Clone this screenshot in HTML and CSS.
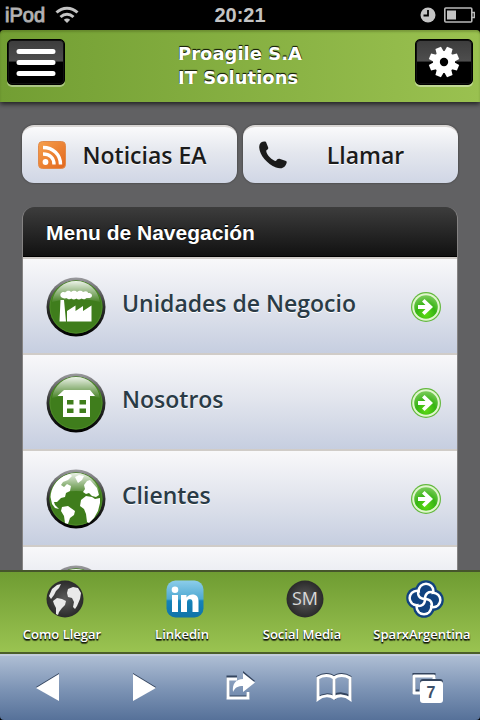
FILE: index.html
```html
<!DOCTYPE html>
<html lang="es">
<head>
<meta charset="utf-8">
<meta name="viewport" content="width=device-width, initial-scale=1">
<title>Proagile S.A</title>
<link rel="stylesheet" href="styles.css">
</head>
<body>
<svg class="defs" width="0" height="0" aria-hidden="true">
  <defs>
    <linearGradient id="gloss" x1="0" y1="0" x2="0" y2="1">
      <stop offset="0" stop-color="#fff" stop-opacity=".9"/>
      <stop offset="1" stop-color="#fff" stop-opacity=".05"/>
    </linearGradient>
    <linearGradient id="rim" x1="0" y1="0" x2="0" y2="1">
      <stop offset="0" stop-color="#9a9a9e"/>
      <stop offset=".5" stop-color="#2c2e2c"/>
      <stop offset="1" stop-color="#000"/>
    </linearGradient>
    <radialGradient id="dark">
      <stop offset="0" stop-color="#5c5c5c"/>
      <stop offset="1" stop-color="#2a2a2a"/>
    </radialGradient>
    <linearGradient id="orange" x1="0" y1="0" x2="1" y2="1">
      <stop offset="0" stop-color="#f6a04d"/>
      <stop offset="1" stop-color="#e2661c"/>
    </linearGradient>
    <linearGradient id="blue" x1="0" y1="0" x2="0" y2="1">
      <stop offset="0" stop-color="#8ccdea"/>
      <stop offset=".5" stop-color="#4fa9d2"/>
      <stop offset=".55" stop-color="#1583b8"/>
      <stop offset="1" stop-color="#0e73a8"/>
    </linearGradient>
    <radialGradient id="lime" cx=".5" cy=".8" r=".8">
      <stop offset="0" stop-color="#5fdc14"/>
      <stop offset=".5" stop-color="#36b413"/>
      <stop offset="1" stop-color="#7ccb5c"/>
    </radialGradient>
    <symbol id="ball" viewBox="0 0 60 60">
      <circle cx="30" cy="30" r="29.5" fill="url(#rim)"/>
      <circle cx="30" cy="30" r="26.5" fill="#3f7d1c"/>
      <circle cx="30" cy="30" r="26" fill="none" stroke="#4d8a28"/>
    </symbol>
    <symbol id="shine" viewBox="0 0 60 60">
      <path d="M6 25C8 12 18 4 30 4s22 8 24 21c-14-4-34-4-48 0z" fill="url(#gloss)"/>
    </symbol>
    <symbol id="go" viewBox="0 0 32 32">
      <circle cx="16" cy="16" r="15" fill="#63b83d"/>
      <circle cx="16" cy="16" r="13.8" fill="#e0f6cd"/>
      <circle cx="16" cy="16" r="11.8" fill="url(#lime)"/>
      <path d="M8 14h7.500l-3.500-3.500L14.500 8l8.500 8-8.500 8-2.500-2.500L15.500 18H8z" fill="#fff"/>
    </symbol>
  </defs>
</svg>

<div class="app">
  <div class="status">
    <div class="status-side">
      <span class="device">iPod</span>
      <svg width="24" height="18" viewBox="0 0 24 18" fill="none" stroke="#c4c4c4" stroke-width="3">
        <path d="M1.500 6.500C7.500.700 16.500.700 22.500 6.500M5.500 11c4-3.600 9-3.600 13 0"/>
        <path d="M12 17l-3.200-3.300c2-1.700 4.400-1.700 6.400 0z" fill="#c4c4c4" stroke="none"/>
      </svg>
    </div>
    <span class="clock">20:21</span>
    <div class="status-side status-end">
      <svg width="16" height="16" viewBox="0 0 16 16"><circle cx="8" cy="8" r="7.500" fill="#c4c4c4"/><path d="M8 3v5.500H3.500" fill="none" stroke="#000" stroke-width="1.800"/></svg>
      <svg width="31" height="16" viewBox="0 0 31 16"><rect x=".8" y="1" width="27" height="14" rx="1" fill="none" stroke="#b9b9b9" stroke-width="1.600"/><path d="M28 5.500h2.300v5H28" fill="none" stroke="#b9b9b9" stroke-width="1.400"/><path d="M3 3.500h9v9H3z" fill="#c4c4c4"/></svg>
    </div>
  </div>

  <header class="top">
    <button class="tool" type="button" aria-label="Menu">
      <svg width="40" height="29" viewBox="0 0 40 29"><path d="M3 3.500h34M3 14.500h34M3 25.500h34" stroke="#fff" stroke-width="5" stroke-linecap="round"/></svg>
    </button>
    <h1 class="title">Proagile S.A<br>IT Solutions</h1>
    <button class="tool" type="button" aria-label="Ajustes">
      <svg width="32" height="32" viewBox="-16 -16 32 32" fill="#fff">
        <g><path id="tooth" d="M-3.800-9l.8-6.200h6L3.800-9v18l-.8 6.200h-6L-3.800 9z" transform="rotate(22.500)"/>
        <use href="#tooth" transform="rotate(45)"/><use href="#tooth" transform="rotate(90)"/><use href="#tooth" transform="rotate(135)"/></g>
        <circle r="11"/><circle r="4.200" fill="#000"/>
      </svg>
    </button>
  </header>

  <main class="content">
    <div class="actions">
      <a class="action" href="#noticias">
        <svg width="28" height="28" viewBox="0 0 28 28"><rect x=".5" y=".5" width="27" height="27" rx="4" fill="url(#orange)" stroke="#e08a4c"/><g fill="none" stroke="#fff" stroke-width="3.400"><path d="M5 6.500c10 0 17.500 7 17.500 17M5 13c6.500 0 11 4 11 10.500"/></g><circle cx="7.500" cy="21" r="2.900" fill="#fff"/></svg>
        <span>Noticias EA</span>
      </a>
      <a class="action" href="#llamar">
        <svg width="28" height="28" viewBox="0 0 28 28"><path d="M2 1.500C3.500.500 6 .200 7 1l2.200 5.500c.3 1.200-.5 2.200-2 3C7 13.500 13.500 19.500 17 20c1-1.600 2-2.500 3.400-2.200L27 20c1.200.7.800 2.300-.4 4.200C24.500 27.500 21 28 17 26.500 8 23 .5 14 .2 6.500.200 4.200.8 2.500 2 1.500z" fill="#1b1b1b"/></svg>
        <span>Llamar</span>
      </a>
    </div>

    <nav class="panel">
      <h2 class="panel-title">Menu de Navegación</h2>
      <ul class="menu">
        <li><a class="row" href="#unidades">
          <svg width="60" height="60" viewBox="0 0 60 60"><use href="#ball"/><path d="M14.500 23h3.500l2 21.500h-6.500zM21 44.500V34l8.500-5.500V34l7.500-5v5l8.500-5.500v16z" fill="#fff"/><path d="M15 20c-2-3 1-6 4-4.500 2-2.500 5-2 6-.5 2-2 5-1.500 6 0 2-2 5-1.500 6 0 3-1.500 5-.5 5 1 3-.5 5 2 3.500 4-2 2-4 .5-5 1-2 2-4 1-5 .5-2 1.500-4 1-5 0-2 1.500-4 1-5 0-2 1.500-4 .5-5-.5-2 1-4 0-5.500-1z" fill="#fff"/><use href="#shine"/></svg>
          <span class="label">Unidades de Negocio</span>
          <svg width="32" height="32"><use href="#go"/></svg>
        </a></li>
        <li><a class="row" href="#nosotros">
          <svg width="60" height="60" viewBox="0 0 60 60"><use href="#ball"/><path d="M18 17h26l5 6H11.500zM17 23h27v21H17z" fill="#fff"/><path d="M21 27h6.500v4.500H21zM33.500 27H40v4.500h-6.500zM21 35.500h6.500V40H21zM33.500 35.500H40V40h-6.500z" fill="#3f7d1c"/><use href="#shine"/></svg>
          <span class="label">Nosotros</span>
          <svg width="32" height="32"><use href="#go"/></svg>
        </a></li>
        <li><a class="row" href="#clientes">
          <svg width="60" height="60" viewBox="0 0 60 60"><use href="#ball"/><path d="M4.500 28C5 19 10 11 18 7l6-2 2 2-4 4-5 2-2 3 3 2 3-3 4 2-1 5-4 2-1 4-4 1-4 4-3 0 1 3 2 2 2 2-4-1-3-4zM16 38l6-1 7 5-1 4-4 3-2 6-3-1-1-7-3-5zM29 8l4-2 5 1-2 4-4 3zM38 16l3-4 3-1 7 8 2 7-3 2-4-1-3-3-3 1-3-2 2-3zM35 31l5-4 6 1 3 2 5-1 0 5-2 8-4 7-5 5-2-1-1-8-2-5-4-3z" fill="#fff"/><use href="#shine"/></svg>
          <span class="label">Clientes</span>
          <svg width="32" height="32"><use href="#go"/></svg>
        </a></li>
        <li class="row">
          <svg width="60" height="60" viewBox="0 0 60 60"><use href="#ball"/><use href="#shine"/></svg>
        </li>
      </ul>
    </nav>
  </main>

  <nav class="tabs">
    <a class="tab" href="#como-llegar">
      <svg width="38" height="38" viewBox="0 0 38 38"><circle cx="19" cy="19" r="18.500" fill="url(#dark)"/><path d="M3 16L6 9l5-4 4-1-2 4-3 3-2 4-3 4zM7 21l4-3 5 1 4 2-1 4-3 3-3 4-1 3-2-1 0-6-2-4zM22 9l5-2 5 1 3 5-1 6-3 7-2 3-2-2 1-5-2-4-4-1-1-4z" fill="#e9e9e9"/></svg>
      <span>Como Llegar</span>
    </a>
    <a class="tab" href="#linkedin">
      <svg width="38" height="38" viewBox="0 0 38 38"><rect x=".5" y=".5" width="37" height="37" rx="9" fill="url(#blue)"/><path d="M6 15h6v17H6zM15 15h5.500v2.500C22 15.500 24 14.500 26.500 14.500c4 0 6 2.500 6 7V32h-6V22.500c0-2.300-.7-3.500-2.600-3.500-2 0-2.900 1.400-2.900 3.500V32h-6z" fill="#fff"/><circle cx="9" cy="9.800" r="3.300" fill="#fff"/></svg>
      <span>Linkedin</span>
    </a>
    <a class="tab" href="#social">
      <svg width="38" height="38" viewBox="0 0 38 38"><circle cx="19" cy="19" r="18.500" fill="url(#dark)"/><text class="sm" x="19" y="25" text-anchor="middle">SM</text></svg>
      <span>Social Media</span>
    </a>
    <a class="tab" href="#sparx">
      <svg width="38" height="38" viewBox="-19 -19 38 38">
        <g fill="#10427f"><circle r="12"/><circle cx="1" cy="-8" r="10.800"/><circle cx="8" cy="1" r="10.800"/><circle cx="-1" cy="8" r="10.800"/><circle cx="-8" cy="-1" r="10.800"/></g>
        <g fill="#fff"><circle cx="1" cy="-8" r="8.600"/><circle cx="8" cy="1" r="8.600"/><circle cx="-1" cy="8" r="8.600"/><circle cx="-8" cy="-1" r="8.600"/></g>
        <g fill="#10427f"><circle r="8"/><circle cx="1" cy="-8" r="6.100"/><circle cx="8" cy="1" r="6.100"/><circle cx="-1" cy="8" r="6.100"/><circle cx="-8" cy="-1" r="6.100"/></g>
        <g fill="none" stroke="#fff" stroke-width="2.500">
          <path id="petal" d="M0 0C-5 0-8-3-6.500-9"/>
          <use href="#petal" transform="rotate(90)"/><use href="#petal" transform="rotate(180)"/><use href="#petal" transform="rotate(270)"/>
        </g>
      </svg>
      <span>SparxArgentina</span>
    </a>
  </nav>

  <div class="browser">
    <button type="button" aria-label="Atrás"><svg width="46" height="34" viewBox="0 0 46 34"><path d="M11 16L34 2v3L12 17z" fill="#33445e"/><path d="M11 17L34 3v27z" fill="#fff"/></svg></button>
    <button type="button" aria-label="Adelante"><svg width="46" height="34" viewBox="0 0 46 34"><path d="M13 2l23 14-1 2L13 5z" fill="#33445e"/><path d="M36 17L13 3v27z" fill="#fff"/></svg></button>
    <button type="button" aria-label="Compartir"><svg width="46" height="34" viewBox="0 0 46 34"><path d="M22 6H13v20h20v-5" fill="none" stroke="#33445e" stroke-width="3"/><path d="M22 8H13v19h20v-6" fill="none" stroke="#fff" stroke-width="3"/><path d="M28 0l12 10-3 2-9-8z" fill="#33445e"/><path d="M28 2l12 9.500L28 21v-6c-5 0-8 1.500-10 6-1-8 3-13 10-13z" fill="#fff"/></svg></button>
    <button type="button" aria-label="Marcadores"><svg width="46" height="34" viewBox="0 0 46 34" fill="none" stroke-width="3"><path d="M24 26c-4-3-11-3-16 1V6c5-3.500 12-3.500 16 0 4-3.500 11-3.500 16 0v20c-5-4-12-4-16-1zM24 7v21" stroke="#33445e"/><path d="M24 27c-4-3-11-3-16 1V7c5-3.500 12-3.500 16 0 4-3.500 11-3.500 16 0v21c-5-4-12-4-16-1zM24 7v21" stroke="#fff"/></svg></button>
    <button type="button" aria-label="Pestañas"><svg width="46" height="34" viewBox="0 0 46 34"><path d="M29 7V3.500H9V20h5" fill="none" stroke="#33445e" stroke-width="3"/><path d="M29 9V5H9v17h6" fill="none" stroke="#fff" stroke-width="3" stroke-linejoin="round"/><rect x="15" y="8" width="23" height="20" rx="3" fill="#33445e"/><rect x="15" y="10" width="23" height="22" rx="3" fill="#fff"/><text class="count" x="26" y="27" text-anchor="middle">7</text></svg></button>
  </div>
</div>
</body>
</html>
```
FILE: styles.css
```css
* {
  box-sizing: border-box;
}

body {
  margin: 0;
  background: #000;
  font-family: "Open Sans", "Noto Sans", sans-serif;
}

svg {
  display: block;
  flex: none;
}

.defs {
  position: absolute;
}

a {
  color: inherit;
  text-decoration: none;
}

.app {
  display: flex;
  flex-direction: column;
  height: 100vh;
  overflow: hidden;
}

.status {
  display: flex;
  flex: none;
  align-items: center;
  height: 30px;
  padding: 0 5px;
  background: #000;
  color: #c4c4c4;
  font: 20px "Liberation Sans", sans-serif;
}

.status-side {
  display: flex;
  flex: 1;
  align-items: center;
  gap: 10px;
}

.status-end {
  justify-content: flex-end;
  gap: 8px;
}

.device {
  -webkit-text-stroke: 1px #a8a8a8;
}

.clock {
  font-weight: bold;
}

.top {
  position: relative;
  display: flex;
  flex: none;
  align-items: flex-start;
  justify-content: space-between;
  height: 72px;
  padding: 9px 7px 0;
  border-radius: 4px 4px 0 0;
  background: linear-gradient(90deg, #729e33, #9ac150);
  box-shadow: inset 0 2px 2px rgba(60, 80, 20, .3), 0 2px 5px rgba(0, 0, 0, .7);
}

.tool {
  display: flex;
  align-items: center;
  justify-content: center;
  width: 58px;
  height: 46px;
  padding: 0;
  border: 1px solid #000;
  border-radius: 5px;
  background: linear-gradient(#3c3c3c, #4e4e4e 48%, #000 50%);
  box-shadow: inset 0 0 0 1px #111, 0 2px 0 rgba(255, 255, 255, .4);
}

.title {
  margin: 3px 0 0;
  color: #fff;
  font: bold 18px/24px "DejaVu Sans", sans-serif;
  text-shadow: 0 -1px 0 #1c260c, 0 -1px 1px #000;
}

.content {
  flex: 1;
  min-height: 0;
  padding: 23px 22px 0;
  overflow: hidden;
  background: #616163;
}

.actions {
  display: flex;
  gap: 6px;
  margin-bottom: 24px;
}

.action {
  display: flex;
  flex: 1;
  align-items: center;
  height: 58px;
  padding: 0 14px 0 16px;
  border-top: 2px solid #d8d5d3;
  border-radius: 12px;
  background: linear-gradient(#fafafb, #e4e7ee 45%, #d0d6e5);
  box-shadow: 0 0 2px rgba(0, 0, 0, .5);
  color: #1b1b1b;
  font-size: 23px;
  font-weight: 600;
  text-shadow: 0 1px 0 #fff;
}

.action span {
  flex: 1;
  text-align: center;
}

.panel {
  overflow: hidden;
  border: 1px solid #858383;
  border-top: 0;
  border-radius: 12px 12px 0 0;
}

.panel-title {
  margin: 0;
  padding: 2px 23px 0;
  background: linear-gradient(#3d3d3d, #111);
  border-bottom: 1px solid #000;
  color: #fff;
  font: bold 21px/47px "Liberation Sans", sans-serif;
  text-shadow: 0 -1px 1px #000;
}

.menu {
  margin: 0;
  padding: 0;
  list-style: none;
}

.row {
  display: flex;
  align-items: center;
  height: 96px;
  padding: 2px 15px 0 23px;
  border-top: 2px solid #d0ccc8;
  background: linear-gradient(#f8f8fa, #e3e6ee 45%, #c6cee0);
}

.label {
  flex: 1;
  padding: 0 0 8px 16px;
  color: #2a3b46;
  font-size: 23px;
  font-weight: 600;
  text-shadow: 0 1px 0 #fff;
}

.tabs {
  display: grid;
  flex: none;
  grid-template-columns: repeat(4, 1fr);
  height: 84px;
  border-top: 2px solid #46552c;
  border-bottom: 2px solid #4c5f2a;
  background: linear-gradient(#6f9c32, #9ac351);
}

.tab {
  display: flex;
  flex-direction: column;
  align-items: center;
  gap: 6px;
  padding: 8px 0 0 4px;
  color: #fff;
  font-size: 13px;
  font-weight: 600;
  line-height: 20px;
  text-shadow: 0 1px 1px #000, 0 2px 1px rgba(0, 0, 0, .6);
  white-space: nowrap;
}

.tab svg {
  margin-left: 6px;
}

.sm {
  fill: #d8d8d8;
  font: 18px "Open Sans", sans-serif;
  text-shadow: none;
}

.browser {
  display: grid;
  flex: none;
  grid-template-columns: repeat(5, 1fr);
  height: 66px;
  padding-right: 5px;
  border-top: 2px solid #c3cddc;
  border-radius: 0 0 4px 4px;
  background: linear-gradient(#aebed4, #7e95b6 50%, #567199);
}

.browser button {
  display: flex;
  align-items: center;
  justify-content: center;
  padding: 0;
  border: 0;
  background: none;
}

.count {
  fill: #3d5069;
  font: bold 16px "Liberation Sans", sans-serif;
}
```
